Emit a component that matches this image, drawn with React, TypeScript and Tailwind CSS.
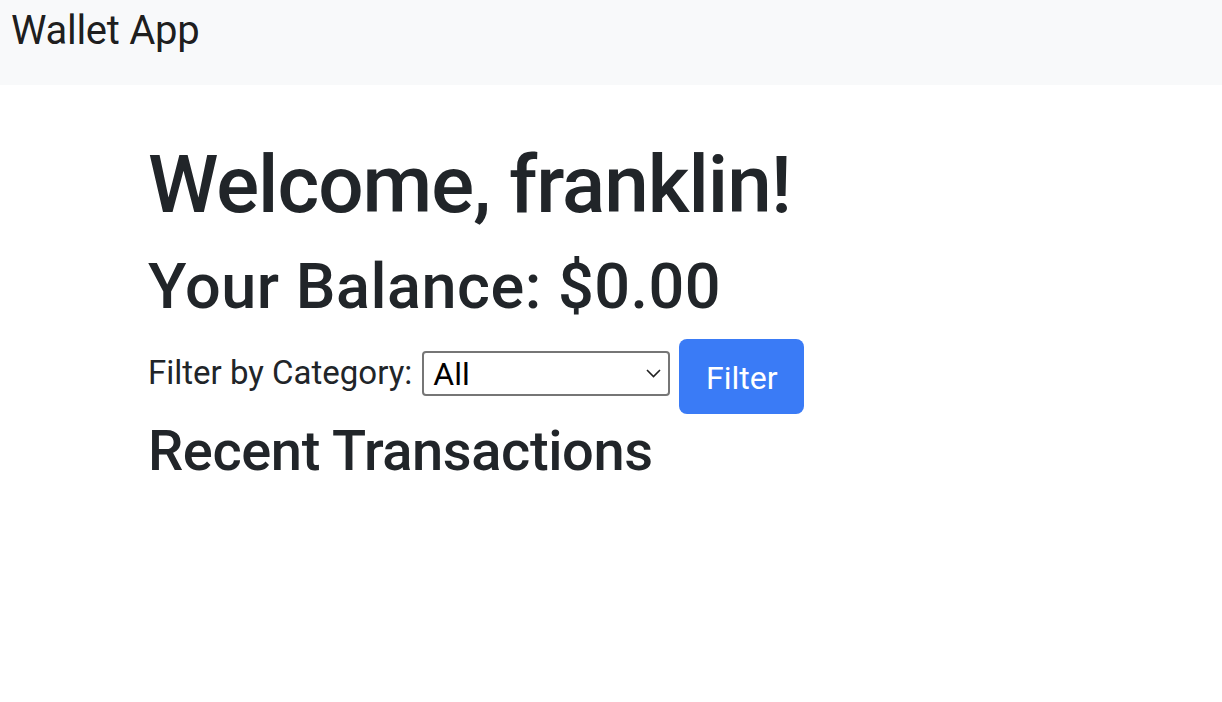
export default function App() {
  return (
    <div className="min-h-screen bg-white text-[#212529] font-['Roboto','Noto_Sans',sans-serif]">
      {/* Navbar */}
      <nav className="h-[85px] bg-[#f8f9fa] px-[11px] pt-[5px]">
        <span className="text-[40px] leading-[52px] tracking-[-0.3px] text-black/90">Wallet App</span>
      </nav>

      <main className="pl-[148px] pt-[52px]">
        <h1 className="text-[80px] leading-[96px] font-medium tracking-[-1px]">Welcome, franklin!</h1>
        <h2 className="mt-[16px] text-[63px] leading-[76px] font-medium tracking-[0.5px]">Your Balance: $0.00</h2>

        <div className="mt-[14px] flex items-start">
          <label className="mt-[14px] text-[33px] leading-[40px]">Filter by Category:</label>
          <div className="relative ml-[10px] mt-[12px] h-[45px] w-[248px] rounded-[4px] border-2 border-[#767676] bg-white">
            <span className="absolute left-[9px] top-[3px] text-[32px] leading-[36px] text-black">All</span>
            <svg
              className="absolute right-[7px] top-[16px]"
              width="15"
              height="9"
              viewBox="0 0 15 9"
              fill="none"
              stroke="#222"
              strokeWidth="1.6"
            >
              <path d="M1 1l6.5 6.5L14 1" />
            </svg>
          </div>
          <button className="ml-[9px] flex h-[75px] w-[125px] items-center justify-center rounded-[8px] bg-[#3a7bf6] pt-[2px] text-[32px] text-white">
            Filter
          </button>
        </div>

        <h3 className="mt-[3px] text-[56px] leading-[68px] font-medium tracking-[-0.4px]">Recent Transactions</h3>
      </main>
    </div>
  )
}
